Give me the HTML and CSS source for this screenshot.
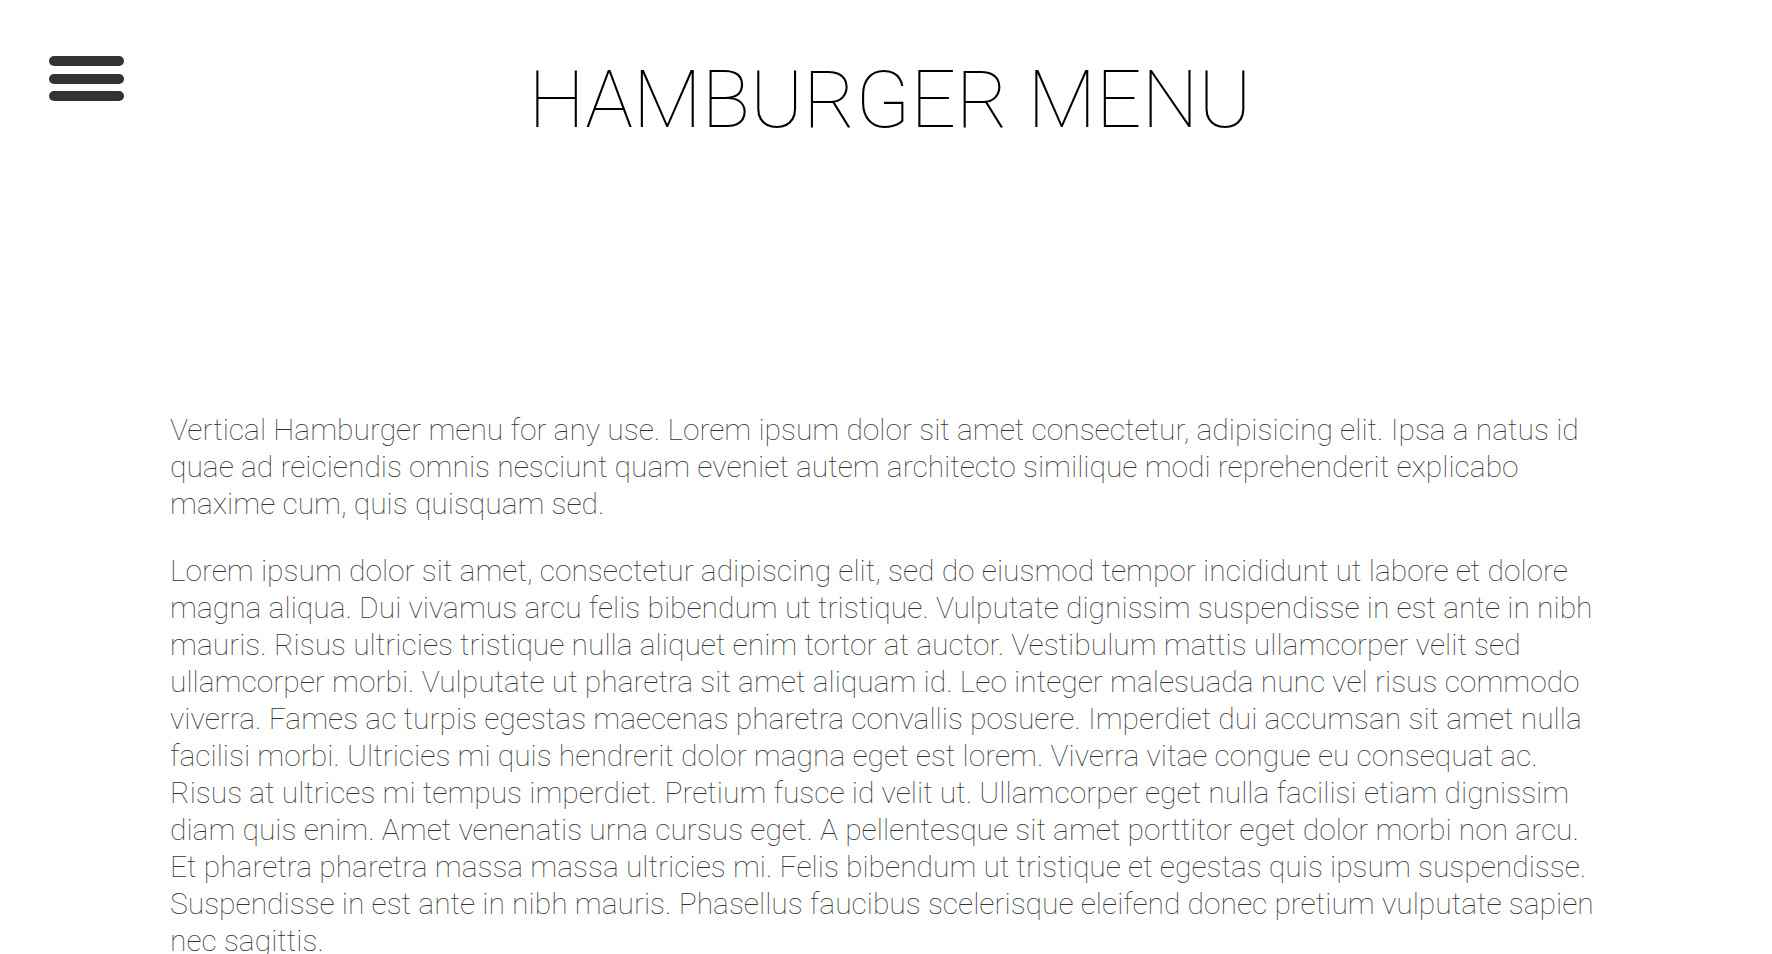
FILE: index.html
```html
<!DOCTYPE html>
<html lang="en">
<head>
<meta charset="utf-8">
<title>Hamburger Menu</title>
<link rel="stylesheet" href="styles.css">
</head>
<body>
<header class="header">
  <button class="burger" aria-label="Menu">
    <span class="bar"></span>
    <span class="bar"></span>
    <span class="bar"></span>
  </button>
  <h1 class="title">HAMBURGER MENU</h1>
</header>
<main class="content">
  <p>Vertical Hamburger menu for any use. Lorem ipsum dolor sit amet consectetur, adipisicing elit. Ipsa a natus id quae ad reiciendis omnis nesciunt quam eveniet autem architecto similique modi reprehenderit explicabo maxime cum, quis quisquam sed.</p>
  <p>Lorem ipsum dolor sit amet, consectetur adipiscing elit, sed do eiusmod tempor incididunt ut labore et dolore magna aliqua. Dui vivamus arcu felis bibendum ut tristique. Vulputate dignissim suspendisse in est ante in nibh mauris. Risus ultricies tristique nulla aliquet enim tortor at auctor. Vestibulum mattis ullamcorper velit sed ullamcorper morbi. Vulputate ut pharetra sit amet aliquam id. Leo integer malesuada nunc vel risus commodo viverra. Fames ac turpis egestas maecenas pharetra convallis posuere. Imperdiet dui accumsan sit amet nulla facilisi morbi. Ultricies mi quis hendrerit dolor magna eget est lorem. Viverra vitae congue eu consequat ac. Risus at ultrices mi tempus imperdiet. Pretium fusce id velit ut. Ullamcorper eget nulla facilisi etiam dignissim diam quis enim. Amet venenatis urna cursus eget. A pellentesque sit amet porttitor eget dolor morbi non arcu. Et pharetra pharetra massa massa ultricies mi. Felis bibendum ut tristique et egestas quis ipsum suspendisse. Suspendisse in est ante in nibh mauris. Phasellus faucibus scelerisque eleifend donec pretium vulputate sapien nec sagittis.</p>
</main>
</body>
</html>
```
FILE: styles.css
```css
* { box-sizing: border-box; }
html, body { margin: 0; padding: 0; background: #fff; }
body { font-family: Roboto, "Liberation Sans", sans-serif; }

.header {
  position: relative;
  display: flex;
  justify-content: center;
  padding-top: 52px;
  padding-left: 8px;
  height: 411px;
}

.burger {
  position: absolute;
  left: 49px;
  top: 56px;
  display: flex;
  flex-direction: column;
  gap: 7.5px;
  padding: 0;
  border: 0;
  background: none;
}
.bar {
  display: block;
  width: 75px;
  height: 10px;
  border-radius: 5px;
  background: #333;
}

.title {
  margin: 0;
  font-weight: 100;
  font-size: 80px;
  line-height: 96px;
  color: #000;
}

.content {
  padding: 0 170px;
  font-weight: 100;
  font-size: 30px;
  line-height: 37px;
  color: #333;
}
.content p { margin: 0 0 30px; }
```
